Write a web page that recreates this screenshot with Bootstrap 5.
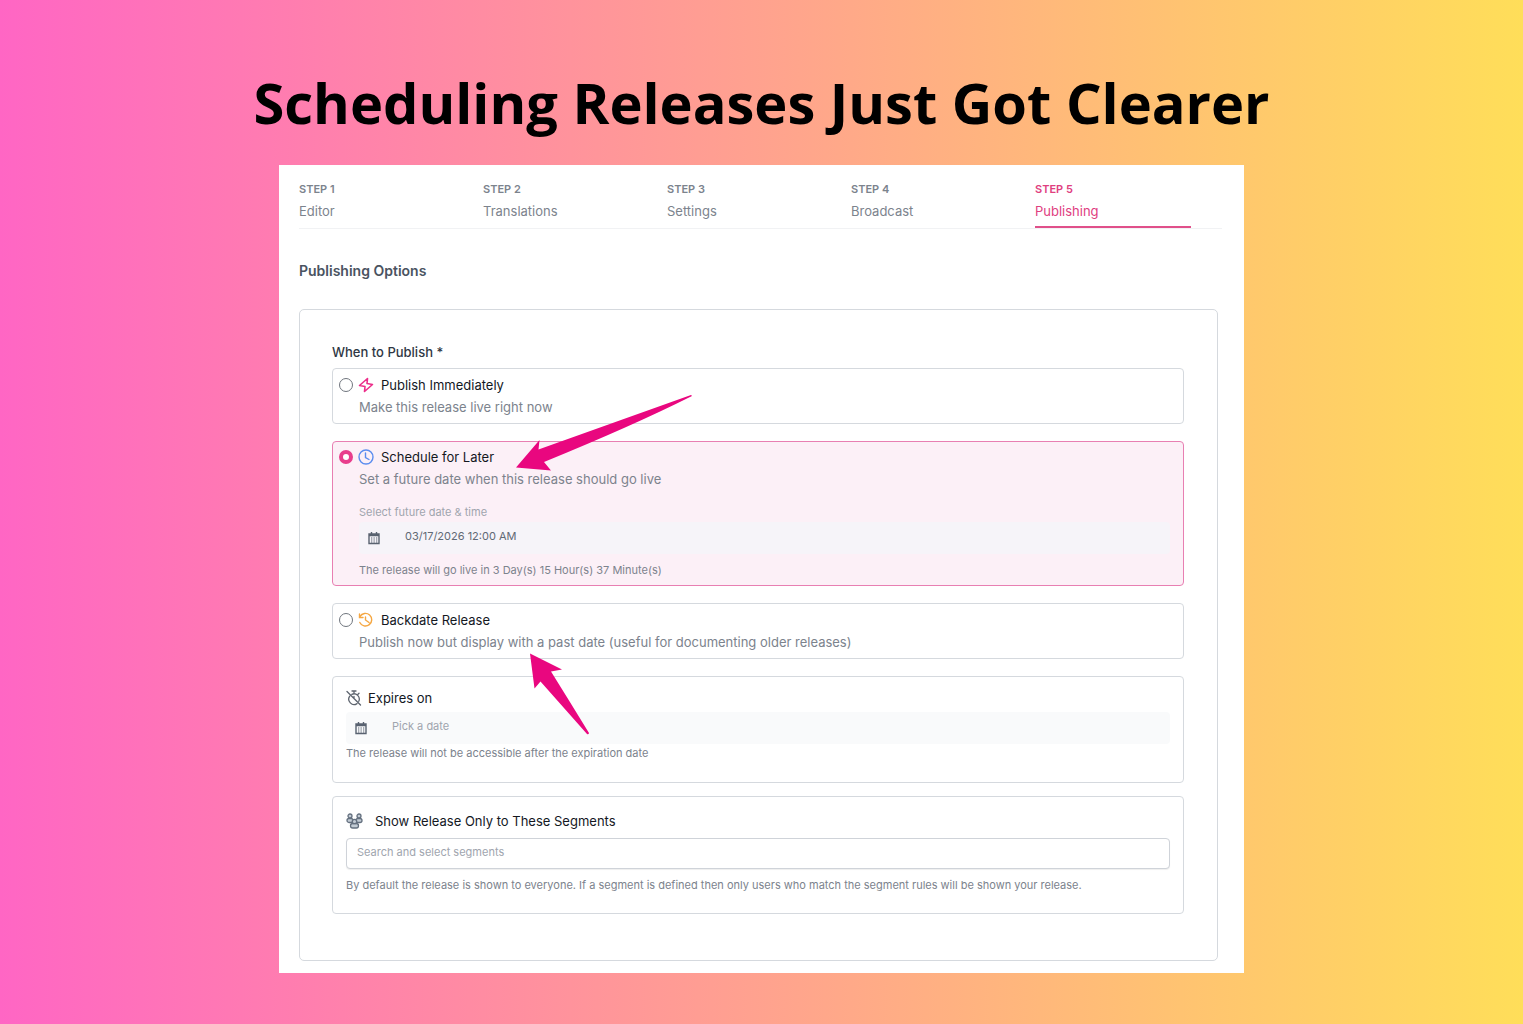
<!DOCTYPE html>
<html lang="en">
<head>
<meta charset="utf-8">
<meta name="viewport" content="width=device-width, initial-scale=1">
<title>Scheduling Releases Just Got Clearer</title>
<link href="https://cdn.jsdelivr.net/npm/bootstrap@5.3.0/dist/css/bootstrap.min.css" rel="stylesheet">
<style>
  :root { --pink: #e83e8c; --line: #d5d9de; --muted-ink: #7c838d; }
  body { min-height: 100vh; font-family: Inter, sans-serif; font-size: 13px; line-height: 22px; color: #1f2530;
         background: linear-gradient(90deg, #ff66c4, #ffde59); }
  .headline { font-family: "Open Sans", sans-serif; font-weight: 700; font-size: 56px; line-height: 78px; color: #000; padding-top: 63px; margin-bottom: 24px; }
  .sheet { max-width: 965px; padding: 14px 26px 12px 20px; }
  .steps { display: grid; grid-template-columns: repeat(5, 1fr); column-gap: 28px; padding-right: 31px; margin-right: -4px; border-bottom: 1px solid #f1f2f4; }
  .step-link { color: var(--muted-ink); text-decoration: none; padding-bottom: 4px; border-bottom: 2px solid transparent; }
  .step-link b { display: block; font-size: 11px; line-height: 21px; font-weight: 600; }
  .step-link.current { color: #e0407f; border-color: #e0508a; }
  .section-title { font-size: 14px; line-height: 22px; font-weight: 600; color: #4a5361; margin: 31px 0 27px; }
  .panel { border: 1px solid var(--line); border-radius: 5px; padding: 31px 33px 46px 32px; }
  .group-title { margin-bottom: 5px; color: #2f3744; font-weight: 500; }
  .option { border: 1px solid var(--line); border-radius: 4px; padding: 5px 13px 5px 6px; margin-bottom: 17px; position: relative; }
  .option-title { color: #14181f; gap: 6px; }
  .desc { color: var(--muted-ink); }
  .indent { padding-left: 20px; }
  .option.chosen { border-color: #e87fb2; background: #fcf0f7; padding-top: 4px; padding-bottom: 6px; }
  .option .form-check-input { width: 14px; height: 14px; margin: 0; border: 1px solid #6f757d; flex: none; }
  .option .form-check-input:checked { border: 4px solid var(--pink); background: #fff; }
  .hint { font-size: 11px; line-height: 18px; color: var(--muted-ink); }
  .field-label { font-size: 11px; line-height: 20px; color: #a0a5ae; margin-top: 12px; }
  .date-field { height: 32px; background: #f9fafb; border-radius: 4px; padding: 0 8px; gap: 24px; }
  .chosen .date-field { background: #f6f4f9; margin-bottom: 7px; }
  .date-field input { font-size: 11px; line-height: 22px; color: #616975; padding: 0 0 4px; min-height: 0; }
  .date-field input::placeholder, .seg-input::placeholder { color: #a0a5ae; }
  .expiry { padding: 10px 13px 20px; margin-bottom: 13px; }
  .expiry .option-title { margin-bottom: 3px; }
  .audience { padding: 13px 13px 19px; margin-bottom: 0; }
  .audience .option-title { gap: 12px; margin-bottom: 6px; }
  .seg-input { height: 31px; font-size: 11px; border: 1px solid #cfd3d9; border-radius: 4px; padding: 0 10px 3px; margin-bottom: 7px; box-shadow: 0 1px 1px #0001; }
  .pointer { position: absolute; pointer-events: none; z-index: 2; }
  .pointer-later { left: 179px; top: -50px; }
  .pointer-past { left: 193px; top: 46px; }
  svg { flex: none; }
</style>
</head>
<body>
<svg class="d-none">
  <symbol id="calendar" viewBox="0 0 14 14"><path d="M2 3h10v9.500H2zM2 4.500h10M4.500 1v2M9.500 1v2" fill="none" stroke="#596270" stroke-width="1.400"/><path d="M4 7h6.500M4 9h6.500M4 11h6.500" stroke="#596270" stroke-width="1" stroke-dasharray="1.300 1.200"/></symbol>
</svg>
<main class="container-fluid p-0">
  <h1 class="headline text-center">Scheduling Releases Just Got Clearer</h1>
  <section class="sheet bg-white mx-auto">
    <nav class="steps" aria-label="Steps">
      <a class="step-link" href="#"><b>STEP 1</b>Editor</a>
      <a class="step-link" href="#"><b>STEP 2</b>Translations</a>
      <a class="step-link" href="#"><b>STEP 3</b>Settings</a>
      <a class="step-link" href="#"><b>STEP 4</b>Broadcast</a>
      <a class="step-link current" href="#" aria-current="step"><b>STEP 5</b>Publishing</a>
    </nav>
    <h2 class="section-title">Publishing Options</h2>
    <form class="panel">
      <div class="group-title">When to Publish *</div>

      <div class="option">
        <div class="d-flex align-items-center">
          <input class="form-check-input" type="radio" name="when" id="now">
          <label class="option-title d-flex align-items-center ms-1" for="now"><svg width="18" height="16" viewBox="0 0 18 16" fill="none" stroke="#ec2f8b" stroke-width="1.600" stroke-linejoin="round"><path d="M10.500 1.500 2.500 8.500l5.500 1L7.500 14.500 15.500 7.500l-5.500-1z"/></svg>Publish Immediately</label>
        </div>
        <div class="desc indent">Make this release live right now</div>
      </div>

      <div class="option chosen">
        <div class="d-flex align-items-center">
          <input class="form-check-input" type="radio" name="when" id="later" checked>
          <label class="option-title d-flex align-items-center ms-1" for="later"><svg width="18" height="16" viewBox="0 0 18 16" fill="none" stroke="#5b8def" stroke-width="1.400" stroke-linecap="round"><circle cx="9" cy="8" r="7"/><path d="M8.500 4v4.500l3.500 2"/></svg>Schedule for Later</label>
        </div>
        <div class="desc indent">Set a future date when this release should go live</div>
        <div class="indent">
          <label class="field-label d-block" for="date">Select future date &amp; time</label>
          <div class="date-field d-flex align-items-center"><svg width="14" height="14"><use href="#calendar"/></svg><input class="form-control border-0 bg-transparent" id="date" value="03/17/2026 12:00 AM"></div>
          <div class="hint">The release will go live in 3 Day(s) 15 Hour(s) 37 Minute(s)</div>
        </div>
        <svg class="pointer pointer-later" width="182" height="82" viewBox="0 0 182 82" fill="#e9077f" aria-hidden="true"><path d="M4 75.500 27.500 48l-1 9.500Q95 33 179 3q2 1-1 2Q120 34 32 70l7 8.500z"/></svg>
      </div>

      <div class="option">
        <div class="d-flex align-items-center">
          <input class="form-check-input" type="radio" name="when" id="past">
          <label class="option-title d-flex align-items-center ms-1" for="past"><svg width="18" height="16" viewBox="0 0 18 16" fill="none" stroke="#f5a742" stroke-width="1.400" stroke-linecap="round"><path d="M3 4.500a6.300 6.300 0 1 1-.2 6M2.500 2v3.500H6M8.500 5v3l3.500 2.500"/></svg>Backdate Release</label>
        </div>
        <div class="desc indent">Publish now but display with a past date (useful for documenting older releases)</div>
        <svg class="pointer pointer-past" width="66" height="88" viewBox="0 0 66 88" fill="#e9077f" aria-hidden="true"><path d="M4 3.500 36 19.500 25 21.500Q44 52 63 83q-.5 2-2 1L14.500 31.500 8.500 38.500z"/></svg>
      </div>

      <div class="option expiry">
        <label class="option-title d-flex align-items-center" for="expires"><svg width="16" height="16" viewBox="0 0 16 16" fill="none" stroke="#5d646e" stroke-width="1.300" stroke-linecap="round"><path d="M1 1.500 14.500 15M6 1h4M8 1v2.500M5.800 4.300A5.300 5.300 0 0 1 12.800 11.300M11 13.600A5.300 5.300 0 0 1 3.700 6.200M12 4.200l1-1M8 6.500V8"/></svg>Expires on</label>
        <div class="date-field d-flex align-items-center"><svg width="14" height="14"><use href="#calendar"/></svg><input class="form-control border-0 bg-transparent" id="expires" placeholder="Pick a date"></div>
        <div class="hint">The release will not be accessible after the expiration date</div>
      </div>

      <div class="option audience">
        <label class="option-title d-flex align-items-center" for="segments"><svg width="17" height="16" viewBox="0 0 17 16" fill="#c3ccd5" stroke="#64707f" stroke-width="1.300"><rect x="1" y="5.500" width="6" height="4" rx="2"/><rect x="10" y="5.500" width="6" height="4" rx="2"/><circle cx="4" cy="3" r="2"/><circle cx="13" cy="3" r="2"/><rect x="4.500" y="10.500" width="8" height="4.500" rx="2.200"/><circle cx="8.500" cy="8.500" r="2.200"/></svg>Show Release Only to These Segments</label>
        <input class="seg-input form-control" id="segments" placeholder="Search and select segments">
        <div class="hint">By default the release is shown to everyone. If a segment is defined then only users who match the segment rules will be shown your release.</div>
      </div>
    </form>
  </section>
</main>
<script src="https://cdn.jsdelivr.net/npm/bootstrap@5.3.0/dist/js/bootstrap.bundle.min.js"></script>
</body>
</html>
